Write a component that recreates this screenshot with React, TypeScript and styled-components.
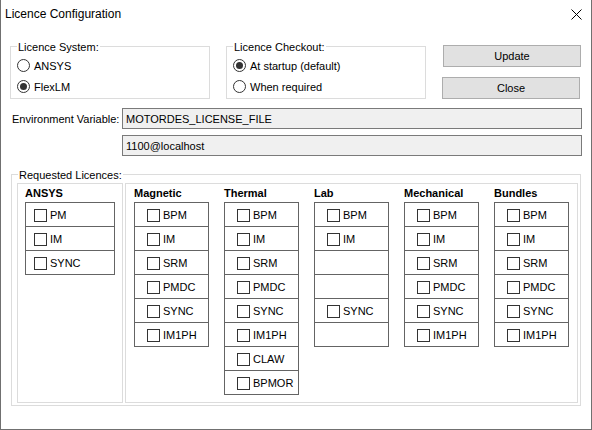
import React from 'react';
import styled, { createGlobalStyle } from 'styled-components';

const GlobalStyle = createGlobalStyle`
  html, body {
    margin: 0;
    padding: 0;
    background: #fff;
  }
  body {
    font-family: "Liberation Sans", Arial, sans-serif;
    font-size: 11px;
    color: #000;
  }
  * {
    box-sizing: border-box;
  }
`;

const Window = styled.div`
  width: 592px;
  height: 430px;
  display: flex;
  flex-direction: column;
  background: #fff;
  border: 1px solid #707070;
  border-top: none;
`;

const TitleBar = styled.div`
  height: 31px;
  display: flex;
  align-items: center;
  justify-content: space-between;
  padding: 0 9px 3px 4px;
  font-size: 12px;
`;

const Body = styled.div`
  flex: 1;
  padding: 14px 9px 0 9px;
  display: flex;
  flex-direction: column;
`;

const TopRow = styled.div`
  display: flex;
  align-items: flex-start;
  gap: 16px;
`;

const GroupBox = styled.div`
  width: 200px;
  margin-top: 1px;
  border: 1px solid #dcdcdc;
  padding: 0 0 1px 6px;
  display: flex;
  flex-direction: column;
`;

const Caption = styled.div`
  align-self: flex-start;
  margin: -6px 0 1px 0;
  padding: 0 1px;
  line-height: 13px;
  background: #fff;
`;

const RadioRow = styled.div`
  height: 21px;
  display: flex;
  align-items: center;
  gap: 4px;
`;

const RadioDot = styled.span<{ $checked?: boolean }>`
  width: 13px;
  height: 13px;
  border-radius: 50%;
  border: 1px solid #333;
  background: #fff;
  position: relative;
  &::after {
    content: '';
    display: ${p => (p.$checked ? 'block' : 'none')};
    position: absolute;
    inset: 2px;
    border-radius: 50%;
    background: #333;
  }
`;

const ButtonColumn = styled.div`
  display: flex;
  flex-direction: column;
  gap: 10px;
  width: 139px;
`;

const Button = styled.button<{ $shift?: number }>`
  width: 138px;
  height: 22px;
  margin-left: ${p => p.$shift || 0}px;
  padding: 0;
  background: #e1e1e1;
  border: 1px solid #adadad;
  font-family: inherit;
  font-size: 11px;
  color: #000;
`;

const FieldRow = styled.div<{ $gap: number }>`
  display: flex;
  align-items: center;
  margin-top: ${p => p.$gap}px;
`;

const FieldLabel = styled.span`
  padding-left: 2px;
`;

const Field = styled.div`
  margin-left: auto;
  width: 460px;
  height: 21px;
  display: flex;
  align-items: center;
  padding-left: 3px;
  background: #f0f0f0;
  border: 1px solid #7a7a7a;
`;

const RequestedBox = styled.div`
  margin: 18px 0 0 1px;
  width: 570px;
  border: 1px solid #dcdcdc;
  padding: 0 2px 2px 5px;
  display: flex;
  flex-direction: column;
`;

const ReqCaption = styled(Caption)`
  margin-left: 1px;
`;

const Panels = styled.div`
  height: 220px;
  display: flex;
  gap: 2px;
`;

const Panel = styled.div<{ $width?: number; $pad: number }>`
  ${p => (p.$width ? `width: ${p.$width}px;` : 'flex: 1;')}
  border: 1px solid #dcdcdc;
  padding-left: ${p => p.$pad}px;
  display: flex;
  gap: 15px;
  align-items: flex-start;
`;

const Column = styled.div<{ $width: number }>`
  width: ${p => p.$width}px;
  display: flex;
  flex-direction: column;
`;

const ColumnHead = styled.div`
  height: 18px;
  line-height: 18px;
  font-weight: bold;
`;

const OptionBox = styled.div`
  border: 1px solid #646464;
  display: flex;
  flex-direction: column;
`;

const OptionRow = styled.div<{ $pad: number }>`
  height: 23px;
  display: flex;
  align-items: center;
  padding-left: ${p => p.$pad}px;
  & + & {
    height: 24px;
    border-top: 1px solid #646464;
  }
`;

const CheckBox = styled.span`
  width: 13px;
  height: 13px;
  margin: 1px 3px 0 0;
  border: 1px solid #333;
  background: #fff;
`;

interface LicenceColumn {
  title: string;
  items: string[];
}

const columns: LicenceColumn[] = [
  { title: 'Magnetic', items: ['BPM', 'IM', 'SRM', 'PMDC', 'SYNC', 'IM1PH'] },
  { title: 'Thermal', items: ['BPM', 'IM', 'SRM', 'PMDC', 'SYNC', 'IM1PH', 'CLAW', 'BPMOR'] },
  { title: 'Lab', items: ['BPM', 'IM', '', '', 'SYNC', ''] },
  { title: 'Mechanical', items: ['BPM', 'IM', 'SRM', 'PMDC', 'SYNC', 'IM1PH'] },
  { title: 'Bundles', items: ['BPM', 'IM', 'SRM', 'PMDC', 'SYNC', 'IM1PH'] }
];

const LicenceList: React.FC<{ col: LicenceColumn; width: number; pad: number }> = ({ col, width, pad }) => (
  <Column $width={width}>
    <ColumnHead>{col.title}</ColumnHead>
    <OptionBox>
      {col.items.map((item, i) => (
        <OptionRow $pad={pad} key={i}>
          {item && (
            <>
              <CheckBox />
              {item}
            </>
          )}
        </OptionRow>
      ))}
    </OptionBox>
  </Column>
);

const App: React.FC = () => {
  return (
    <>
      <GlobalStyle />
      <Window>
        <TitleBar>
          <span>Licence Configuration</span>
          <svg width="11" height="11" viewBox="0 0 11 11">
            <path d="M0.5 0.5 L10.5 10.5 M10.5 0.5 L0.5 10.5" stroke="#000" strokeWidth="1" fill="none" />
          </svg>
        </TitleBar>
        <Body>
          <TopRow>
            <GroupBox>
              <Caption>Licence System:</Caption>
              <RadioRow>
                <RadioDot />
                ANSYS
              </RadioRow>
              <RadioRow>
                <RadioDot $checked />
                FlexLM
              </RadioRow>
            </GroupBox>
            <GroupBox>
              <Caption>Licence Checkout:</Caption>
              <RadioRow>
                <RadioDot $checked />
                At startup (default)
              </RadioRow>
              <RadioRow>
                <RadioDot />
                When required
              </RadioRow>
            </GroupBox>
            <ButtonColumn>
              <Button $shift={1}>Update</Button>
              <Button>Close</Button>
            </ButtonColumn>
          </TopRow>

          <FieldRow $gap={9}>
            <FieldLabel>Environment Variable:</FieldLabel>
            <Field>MOTORDES_LICENSE_FILE</Field>
          </FieldRow>
          <FieldRow $gap={6}>
            <Field>1100@localhost</Field>
          </FieldRow>

          <RequestedBox>
            <ReqCaption>Requested Licences:</ReqCaption>
            <Panels>
              <Panel $width={106} $pad={7}>
                <LicenceList col={{ title: 'ANSYS', items: ['PM', 'IM', 'SYNC'] }} width={90} pad={8} />
              </Panel>
              <Panel $pad={8}>
                {columns.map(col => (
                  <LicenceList key={col.title} col={col} width={75} pad={12} />
                ))}
              </Panel>
            </Panels>
          </RequestedBox>
        </Body>
      </Window>
    </>
  );
};

export default App;
